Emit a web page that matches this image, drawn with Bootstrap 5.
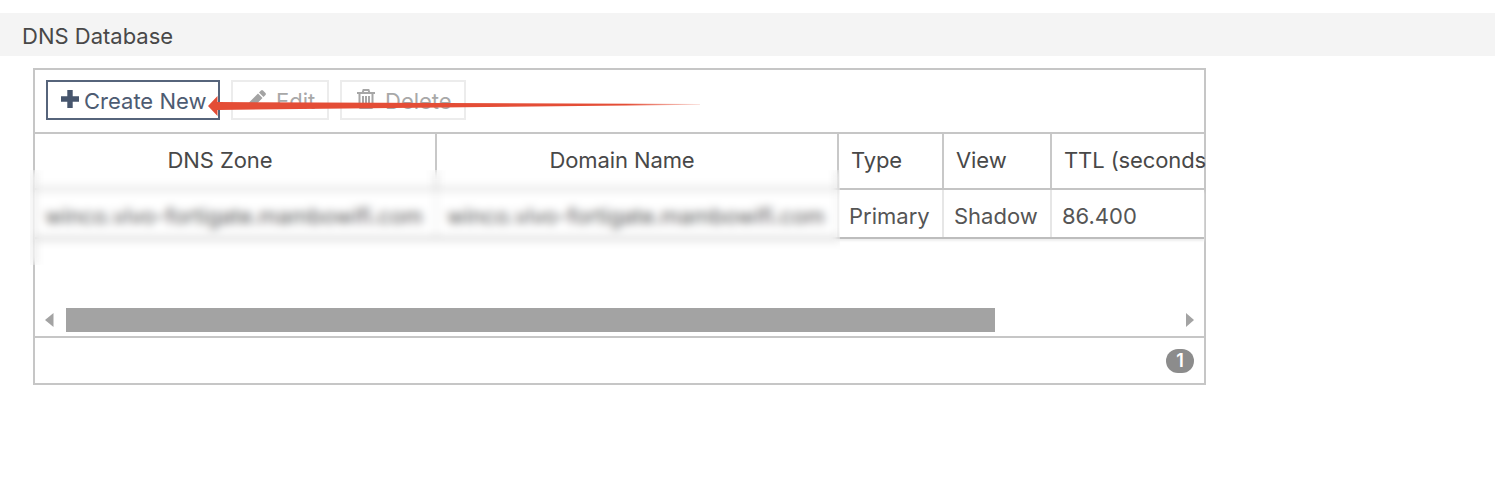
<!DOCTYPE html>
<html lang="en">
  <head>
    <meta charset="UTF-8" />
    <meta name="viewport" content="width=device-width, initial-scale=1.0" />
    <title>DNS Database</title>
    <link
      rel="stylesheet"
      href="https://cdn.jsdelivr.net/npm/bootstrap@5.3.0/dist/css/bootstrap.min.css"
    />
    <style>
      body {
        background-color: #fff;
        color: #484848;
        font-family: Inter, "Liberation Sans", sans-serif;
        font-size: 22px;
        line-height: 24px;
        overflow: hidden;
      }
      .page-title {
        margin-top: 13px;
        height: 43px;
        padding: 3px 0 0 22px;
        background-color: #f4f4f4;
      }
      .dns-panel {
        width: 1173px;
        height: 317px;
        margin: 12px 0 0 33px;
        border: 2px solid #c6c6c6;
      }
      .toolbar {
        height: 64px;
        padding: 10px 11px 0;
        gap: 11px;
        border-bottom: 2px solid #c6c6c6;
      }
      .tool-btn {
        height: 40px;
        padding: 1px 0 0 15px;
        gap: 10px;
        border: 2px solid #ececec !important;
        border-radius: 0;
        color: #a8a8a8 !important;
        font-size: 22px;
        line-height: 24px;
        opacity: 1 !important;
      }
      .tool-create {
        width: 174px;
        padding-left: 13px;
        gap: 5px;
        border-color: #56647b !important;
        color: #4d5b72 !important;
      }
      .tool-edit {
        width: 98px;
      }
      .tool-delete {
        width: 126px;
      }
      .grid-head,
      .grid-line {
        display: grid;
        grid-template-columns: 402px 402px 105px 108px 152px;
      }
      .grid-head {
        height: 56px;
        border-bottom: 2px solid #c4c4c4;
        letter-spacing: -0.1px;
      }
      .grid-head > div {
        padding: 14px 0 0 12px;
        border-right: 2px solid #c8c8c8;
        white-space: nowrap;
      }
      .grid-head .wide-head {
        padding-left: 0;
        padding-right: 30px;
        text-align: center;
      }
      .grid-line {
        height: 49px;
        border-bottom: 2px solid #bdbdbd;
        box-shadow: 0 2px 2px #eee;
        color: #555;
      }
      .grid-line > div {
        padding: 14px 0 0 10px;
        border-right: 2px solid #e6e6e6;
        white-space: nowrap;
      }
      .grid-line .zone-name {
        letter-spacing: -0.08px;
      }
      .grid-head > div:last-child,
      .grid-line > div:last-child {
        border-right: 0;
      }
      .redacted {
        position: absolute;
        left: -5px;
        top: 100px;
        width: 810px;
        height: 95px;
        backdrop-filter: blur(4px);
      }
      .scroll-row {
        height: 30px;
        padding: 0 10px 0 10px;
        border-bottom: 2px solid #c6c6c6;
      }
      .scroll-thumb {
        width: 929px;
        height: 24px;
        margin: 0 auto 0 12px;
        background-color: #a3a3a3;
      }
      .grid-foot {
        height: 45px;
      }
      .count-pill {
        width: 28px;
        height: 24px;
        margin-right: 10px;
        border-radius: 13px;
        background-color: #8c8c8c;
        color: #fff;
        font-size: 18px;
        font-weight: 600;
      }
      .arrow {
        position: absolute;
        left: 173px;
        top: 26px;
      }
    </style>
  </head>
  <body>
    <div class="page-title d-flex align-items-center"><span>DNS Database</span></div>

    <div class="dns-panel position-relative d-flex flex-column">
      <div class="toolbar d-flex align-items-start flex-shrink-0">
        <button type="button" class="btn tool-btn tool-create d-flex align-items-center text-nowrap">
          <svg width="18" height="18" viewBox="0 0 18 18" class="mb-1 flex-shrink-0">
            <path d="M6.300 0h5.400v6.300H18v5.400h-6.300V18H6.300v-6.300H0V6.300h6.300z" fill="#46556d" />
          </svg>
          <span>Create New</span>
        </button>
        <button type="button" class="btn tool-btn tool-edit d-flex align-items-center" disabled>
          <svg width="18" height="18" viewBox="0 0 18 18" class="mb-1 flex-shrink-0">
            <path d="M0 18l1-5.500L10 3.500l4.500 4.500L5.500 17zM11 2.500L13 .5q1-.8 2 0L17.500 3q.8 1 0 2l-2 2z" fill="#a3a3a3" />
          </svg>
          <span>Edit</span>
        </button>
        <button type="button" class="btn tool-btn tool-delete d-flex align-items-center" disabled>
          <svg width="18" height="20" viewBox="0 0 18 20" class="mb-1 flex-shrink-0" fill="none" stroke="#a6a6a6" stroke-width="2">
            <path d="M0 4h18M5.500 4l1-3h5l1 3M2.500 4v14q0 1 1 1h11q1 0 1-1V4M6 7v9M9 7v9M12 7v9" />
          </svg>
          <span>Delete</span>
        </button>
      </div>

      <div class="grid-head flex-shrink-0">
        <div class="wide-head"><span>DNS Zone</span></div>
        <div class="wide-head"><span>Domain Name</span></div>
        <div><span>Type</span></div>
        <div><span>View</span></div>
        <div><span>TTL (seconds</span></div>
      </div>
      <div class="grid-line flex-shrink-0">
        <div class="zone-name"><span>winco.vivo-fortigate.mambowifi.com</span></div>
        <div class="zone-name"><span>winco.vivo-fortigate.mambowifi.com</span></div>
        <div><span>Primary</span></div>
        <div><span>Shadow</span></div>
        <div><span>86.400</span></div>
      </div>
      <div class="redacted"></div>

      <div class="scroll-row mt-auto d-flex align-items-start flex-shrink-0">
        <svg width="9" height="24" viewBox="0 0 9 24">
          <path d="M0 12l8.500-7v14z" fill="#a3a3a3" />
        </svg>
        <div class="scroll-thumb"></div>
        <svg width="9" height="24" viewBox="0 0 9 24">
          <path d="M9 12L1 5v14z" fill="#a3a3a3" />
        </svg>
      </div>
      <div class="grid-foot d-flex align-items-center justify-content-end flex-shrink-0">
        <span class="count-pill d-flex align-items-center justify-content-center">1</span>
      </div>

      <!-- callout pointing at Create New -->
      <svg class="arrow" width="500" height="20" viewBox="0 0 500 20">
        <defs>
          <linearGradient id="fade">
            <stop offset="0.85" stop-color="#e44d36" />
            <stop offset="1" stop-color="#e44d36" stop-opacity="0.200" />
          </linearGradient>
        </defs>
        <path d="M0 10L9.500 0v6L492 8v.8L9.500 14v6z" fill="url(#fade)" />
      </svg>
    </div>

    <script src="https://cdn.jsdelivr.net/npm/bootstrap@5.3.0/dist/js/bootstrap.bundle.min.js"></script>
  </body>
</html>
